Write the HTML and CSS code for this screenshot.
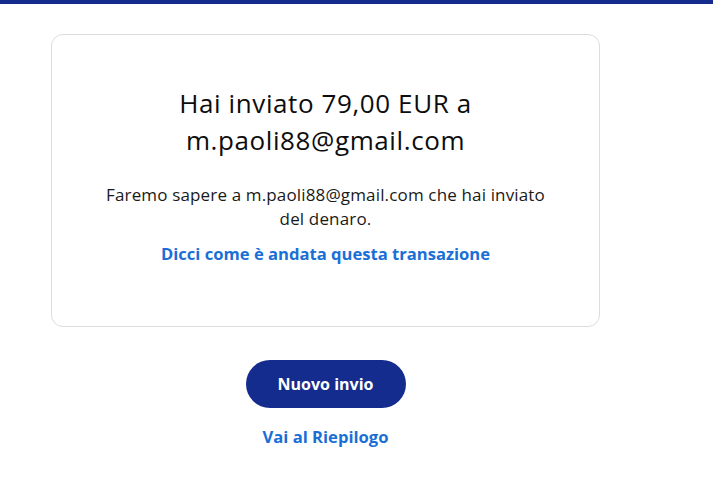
FILE: index.html
```html
<!DOCTYPE html>
<html lang="it">
<head>
<meta charset="utf-8">
<link rel="stylesheet" href="styles.css">
</head>
<body>
<div class="topbar"></div>
<main class="wrap">
  <section class="card">
    <h1 class="title">Hai inviato 79,00 EUR a<br>m.paoli88@gmail.com</h1>
    <p class="desc">Faremo sapere a m.paoli88@gmail.com che hai inviato del denaro.</p>
    <a class="link" href="#">Dicci come è andata questa transazione</a>
  </section>
  <div class="actions">
    <a class="btn" href="#">Nuovo invio</a>
    <a class="link" href="#">Vai al Riepilogo</a>
  </div>
</main>
</body>
</html>
```

FILE: styles.css
```css
html, body {
  margin: 0;
  padding: 0;
  background: #ffffff;
  font-family: "Open Sans", "Noto Sans", sans-serif;
  color: #1a1a1a;
}
.topbar {
  height: 4px;
  background: #142c8e;
}
.wrap {
  width: 549px;
  margin: 30px 0 0 51px;
  display: flex;
  flex-direction: column;
  align-items: center;
}
.card {
  box-sizing: border-box;
  width: 549px;
  height: 293px;
  border: 1px solid #dcdcdc;
  border-radius: 12px;
  padding: 50px 20px 0;
  display: flex;
  flex-direction: column;
  align-items: center;
  text-align: center;
}
.title {
  margin: 0;
  font-size: 26px;
  line-height: 37px;
  letter-spacing: 0.6px;
  font-weight: 400;
  color: #0d0d0d;
}
.desc {
  margin: 24px 0 0;
  font-size: 17px;
  line-height: 24px;
  letter-spacing: 0.15px;
  max-width: 452px;
  color: #1a1a1a;
}
.link {
  color: #1a6fd6;
  font-weight: 700;
  font-size: 16.6px;
  line-height: 24px;
  text-decoration: none;
}
.card .link {
  margin-top: 11px;
}
.actions {
  margin-top: 33px;
  display: flex;
  flex-direction: column;
  align-items: center;
  gap: 17px;
}
.btn {
  width: 160px;
  height: 48px;
  border-radius: 24px;
  background: #142c8e;
  color: #fff;
  font-weight: 700;
  font-size: 16px;
  display: flex;
  align-items: center;
  justify-content: center;
  text-decoration: none;
}
```
